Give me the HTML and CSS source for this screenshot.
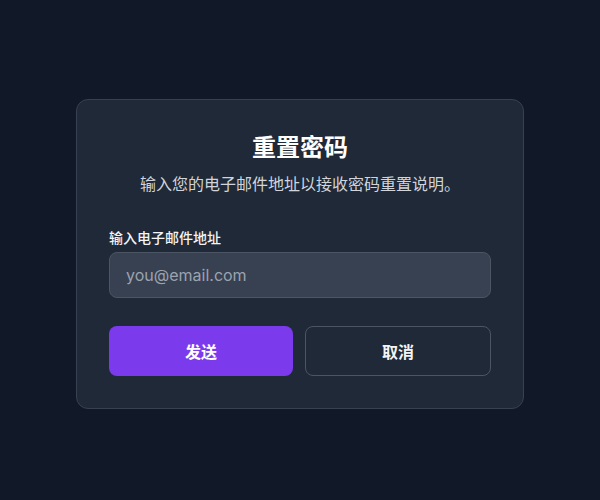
FILE: index.html
```html
<!DOCTYPE html>
<html lang="zh-CN">
<head>
<meta charset="utf-8">
<title>重置密码</title>
<link rel="stylesheet" href="styles.css">
</head>
<body>
<main class="page">
  <form class="card">
    <h1 class="title">重置密码</h1>
    <p class="subtitle">输入您的电子邮件地址以接收密码重置说明。</p>
    <label class="field">
      <span class="label">输入电子邮件地址</span>
      <input class="input" type="email" placeholder="you@email.com">
    </label>
    <div class="actions">
      <button type="button" class="btn btn-primary">发送</button>
      <button type="button" class="btn btn-secondary">取消</button>
    </div>
  </form>
</main>
</body>
</html>
```
FILE: styles.css
```css
* { box-sizing: border-box; }
html, body {
  margin: 0;
  height: 100%;
  background: #111827;
}
body {
  font-family: Inter, "Noto Sans CJK SC", sans-serif;
  color: #f9fafb;
}
.page {
  display: flex;
  justify-content: center;
  padding-top: 99px;
}
.card {
  width: 448px;
  background: #1f2937;
  border: 1px solid #374151;
  border-radius: 12px;
  padding: 32px;
  display: flex;
  flex-direction: column;
}
.title {
  margin: 0;
  font-size: 24px;
  line-height: 32px;
  font-weight: 700;
  text-align: center;
  color: #ffffff;
}
.subtitle {
  margin: 8px 0 0;
  font-size: 16px;
  line-height: 24px;
  text-align: center;
  color: #d1d5db;
}
.field {
  margin-top: 32px;
  display: flex;
  flex-direction: column;
  gap: 4px;
}
.label {
  font-size: 14px;
  line-height: 20px;
  font-weight: 500;
  color: #f3f4f6;
}
.input {
  height: 46px;
  padding: 0 16px;
  font-family: inherit;
  font-size: 16px;
  color: #f9fafb;
  background: #374151;
  border: 1px solid #4b5563;
  border-radius: 8px;
  outline: none;
}
.input::placeholder { color: #9ca3af; }
.actions {
  margin-top: 28px;
  display: flex;
  gap: 12px;
}
.btn {
  flex: 1 1 0;
  box-sizing: content-box;
  height: 50px;
  padding: 0;
  font-family: inherit;
  font-size: 16px;
  font-weight: 700;
  border-radius: 8px;
  cursor: pointer;
}
.btn-primary {
  background: #7c3aed;
  color: #ffffff;
  border: none;
}
.btn-secondary {
  height: 48px;
  background: transparent;
  color: #f3f4f6;
  border: 1px solid #4b5563;
}
```
